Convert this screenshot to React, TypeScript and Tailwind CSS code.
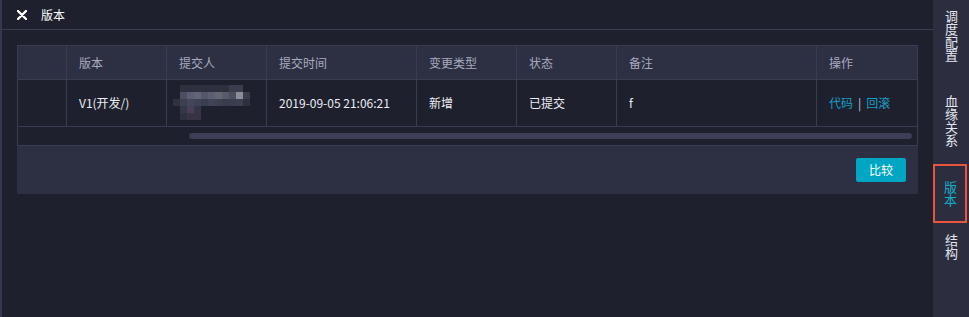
import React from "react";

const font = { fontFamily: '"Noto Sans CJK SC", "Noto Sans", sans-serif' };

function VChars({ text, className }: { text: string; className?: string }) {
  return (
    <div className={"flex justify-center " + (className || "")}>
      <span className="[writing-mode:vertical-rl] text-[13px] leading-[14px]">
        {text}
      </span>
    </div>
  );
}

function Mosaic() {
  const cells: [number, number, number, number, string][] = [
    [7, 0, 63, 7, "#2e3040"],
    [56, 0, 14, 7, "#3b3d4e"],
    [7, 7, 7, 7, "#4c4f62"],
    [14, 7, 7, 7, "#5c5f72"],
    [21, 7, 7, 7, "#62657a"],
    [28, 7, 7, 7, "#545769"],
    [35, 7, 7, 7, "#5d6072"],
    [42, 7, 7, 7, "#63676f"],
    [49, 7, 7, 7, "#585b6b"],
    [56, 7, 7, 7, "#4b4e5f"],
    [63, 7, 7, 7, "#8a8e96"],
    [70, 7, 7, 7, "#3a3c4c"],
    [0, 14, 7, 7, "#2f3141"],
    [7, 14, 7, 7, "#3d4052"],
    [14, 14, 7, 7, "#44475a"],
    [21, 14, 7, 7, "#3f4254"],
    [28, 14, 7, 7, "#3b3e50"],
    [35, 14, 7, 7, "#414455"],
    [42, 14, 7, 7, "#3d4050"],
    [49, 14, 7, 7, "#393c4d"],
    [56, 14, 7, 7, "#3a3d4e"],
    [63, 14, 7, 7, "#3c3f4f"],
    [70, 14, 7, 7, "#2e3040"],
    [7, 21, 7, 7, "#353746"],
    [14, 21, 7, 7, "#4a3f55"],
    [21, 21, 7, 7, "#343648"],
    [7, 28, 7, 7, "#2f3040"],
    [14, 28, 14, 7, "#3a3346"],
  ];
  return (
    <svg width="80" height="36" viewBox="0 0 80 36">
      {cells.map(([x, y, w, h, c], i) => (
        <rect key={i} x={x} y={y} width={w} height={h} fill={c} />
      ))}
    </svg>
  );
}

export default function App() {
  const cols = [
    { w: "w-[49px]", label: "" },
    { w: "w-[100px]", label: "版本" },
    { w: "w-[100px]", label: "提交人" },
    { w: "w-[150px]", label: "提交时间" },
    { w: "w-[100px]", label: "变更类型" },
    { w: "w-[100px]", label: "状态" },
    { w: "w-[200px]", label: "备注" },
    { w: "w-[100px]", label: "操作" },
  ];
  return (
    <div
      className="w-[969px] h-[317px] flex bg-[#1e202d] overflow-hidden text-[#e8eaf2]"
      style={font}
    >
      <div className="flex-1 flex flex-col border-l-2 border-[#34374d]">
        <div className="h-[30px] border-b border-[#3a3d52] flex items-center pl-[15px] shrink-0">
          <svg width="10" height="10" viewBox="0 0 10 10" className="mr-[14px]">
            <path
              d="M1 1 L9 9 M9 1 L1 9"
              stroke="#ffffff"
              strokeWidth="2.4"
              strokeLinecap="round"
            />
          </svg>
          <span className="text-[12px] leading-none text-white">版本</span>
        </div>
        <div className="pl-[15px] pt-[15px]">
          <div className="w-[901px] bg-[#1e202d]">
            <div className="border border-[#393c52] border-b-0">
              <div className="flex h-[34px] bg-[#2d3042] border-b border-[#393c52]">
                {cols.map((c, i) => (
                  <div
                    key={i}
                    className={
                      c.w +
                      " shrink-0 flex items-center pl-[12px] text-[12px] text-[#a7abc0] " +
                      (i < cols.length - 1 ? "border-r border-[#393c52]" : "")
                    }
                  >
                    {c.label}
                  </div>
                ))}
              </div>
              <div className="flex h-[47px] border-b border-[#393c52] text-[#eceef4]">
                <div className="w-[49px] shrink-0 border-r border-[#393c52]" />
                <div className="w-[100px] shrink-0 border-r border-[#393c52] flex items-center pl-[12px] text-[12px]">
                  V1(开发/)
                </div>
                <div className="w-[100px] shrink-0 border-r border-[#393c52] flex items-center pl-[6px]">
                  <Mosaic />
                </div>
                <div className="w-[150px] shrink-0 border-r border-[#393c52] flex items-center pl-[12px] text-[12px]">
                  2019-09-05 21:06:21
                </div>
                <div className="w-[100px] shrink-0 border-r border-[#393c52] flex items-center pl-[12px] text-[12px]">
                  新增
                </div>
                <div className="w-[100px] shrink-0 border-r border-[#393c52] flex items-center pl-[12px] text-[12px]">
                  已提交
                </div>
                <div className="w-[200px] shrink-0 border-r border-[#393c52] flex items-center pl-[12px] text-[12px]">
                  f
                </div>
                <div className="w-[100px] shrink-0 flex items-center pl-[12px] text-[12px]">
                  <span className="text-[#1a9fc4]">代码</span>
                  <span className="mx-[5px] text-[#cfd2dc]">|</span>
                  <span className="text-[#1a9fc4]">回滚</span>
                </div>
              </div>
              <div className="h-[19px] border-b border-[#393c52] flex items-center pl-[171px] pr-[5px]">
                <div className="h-[6px] flex-1 rounded-full bg-[#3b3e56]" />
              </div>
            </div>
            <div className="h-[48px] bg-[#2d3042] flex items-center justify-end pr-[12px]">
              <button className="w-[50px] h-[24px] rounded-[2px] bg-[#00a6c3] text-white text-[12px] leading-none">
                比较
              </button>
            </div>
          </div>
        </div>
      </div>
      <div className="w-[36px] shrink-0 bg-[#2c2e40] flex flex-col text-[#e3e6ef]">
        <VChars text="调度配置" className="mt-[10px]" />
        <VChars text="血缘关系" className="mt-[33px]" />
        <div className="mt-[17px] mr-[2px] h-[59px] border-2 border-[#e8553a] flex items-center justify-center text-[#14aec8]">
          <VChars text="版本" />
        </div>
        <VChars text="结构" className="mt-[11px]" />
      </div>
    </div>
  );
}
